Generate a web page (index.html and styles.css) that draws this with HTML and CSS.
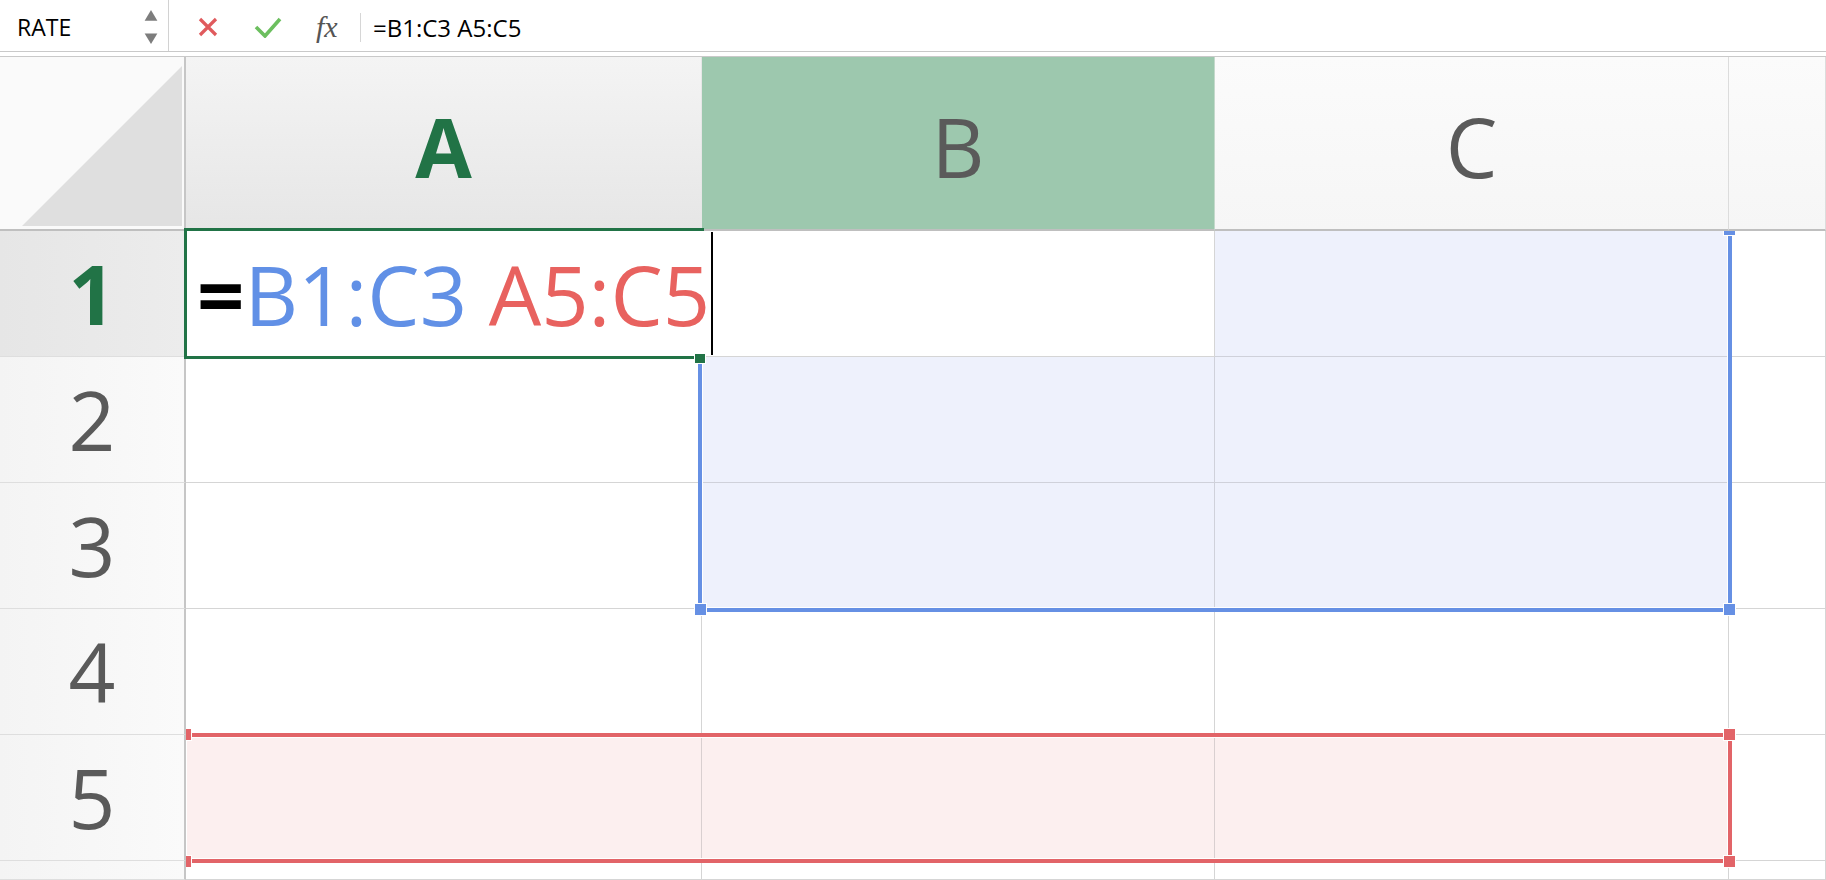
FILE: index.html
```html
<!DOCTYPE html>
<html lang="en">
<head>
    <meta charset="UTF-8">
    <title>Range intersection</title>
    <link rel="stylesheet" href="styles.css">
</head>
<body>
    <div class="formula-bar">
        <div class="name-box">
            <span class="name">RATE</span>
            <svg class="spinner" viewBox="0 0 12 32" width="12" height="32">
                <polygon points="0,10 6,0 12,10" />
                <polygon points="0,22 12,22 6,32" />
            </svg>
        </div>
        <div class="bar-buttons">
            <svg class="btn-cancel" viewBox="0 0 22 22" width="22" height="22">
                <path d="M3 3 L19 19 M19 3 L3 19" />
            </svg>
            <svg class="btn-enter" viewBox="0 0 28 22" width="28" height="22">
                <path d="M2 11 L11 20 L26 3" />
            </svg>
            <span class="fx">fx</span>
            <span class="bar-sep"></span>
        </div>
        <div class="formula-input">=B1:C3 A5:C5</div>
    </div>

    <div class="sheet">
        <div class="corner">
            <svg viewBox="0 0 184 172" width="184" height="172">
                <polygon points="22,169 182,169 182,9" />
            </svg>
        </div>
        <div class="col-head current">A</div>
        <div class="col-head highlight">B</div>
        <div class="col-head">C</div>
        <div class="col-head"></div>

        <div class="row-head current">1</div>
        <div class="cell"></div>
        <div class="cell"></div>
        <div class="cell in-blue"></div>
        <div class="cell"></div>

        <div class="row-head">2</div>
        <div class="cell"></div>
        <div class="cell in-blue"></div>
        <div class="cell in-blue"></div>
        <div class="cell"></div>

        <div class="row-head">3</div>
        <div class="cell"></div>
        <div class="cell in-blue"></div>
        <div class="cell in-blue"></div>
        <div class="cell"></div>

        <div class="row-head">4</div>
        <div class="cell"></div>
        <div class="cell"></div>
        <div class="cell"></div>
        <div class="cell"></div>

        <div class="row-head">5</div>
        <div class="cell in-red"></div>
        <div class="cell in-red"></div>
        <div class="cell in-red"></div>
        <div class="cell"></div>

        <div class="row-head"></div>
        <div class="cell"></div>
        <div class="cell"></div>
        <div class="cell"></div>
        <div class="cell"></div>

        <!-- referenced ranges -->
        <div class="range blue"></div>
        <div class="range red"></div>
        <span class="handle blue tr"></span>
        <span class="handle blue bl"></span>
        <span class="handle blue br"></span>
        <span class="handle red tl"></span>
        <span class="handle red tr"></span>
        <span class="handle red bl"></span>
        <span class="handle red br"></span>

        <!-- cell being edited -->
        <div class="editor"><span class="eq">=</span><span class="ref-blue">B1:C3</span> <span class="ref-red">A5:C5</span><span class="caret"></span></div>
        <span class="handle green"></span>
    </div>
</body>
</html>
```

FILE: styles.css
```css
* {
    box-sizing: border-box;
}

body {
    margin: 0;
    height: 880px;
    overflow: hidden;
    background-color: #ffffff;
    font-family: "Open Sans", "Noto Sans", sans-serif;
    color: #000000;
}

/* formula bar */

.formula-bar {
    display: flex;
    align-items: center;
    height: 52px;
    padding-top: 3px;
    border-bottom: 1px solid #c9c9c9;
}

.name-box {
    display: flex;
    align-items: center;
    align-self: stretch;
    width: 169px;
    margin-top: -3px;
    padding: 3px 10px 0 17px;
    border-right: 1px solid #d2d2d2;
    font-size: 23px;
}

.spinner {
    margin-left: auto;
    width: 14px;
    height: 34px;
    fill: #7d7d7d;
}

.bar-buttons {
    display: flex;
    align-items: center;
    padding-left: 28px;
}

.btn-cancel {
    margin-right: 35px;
    fill: none;
    stroke: #e05a5d;
    stroke-width: 3.2;
}

.btn-enter {
    margin-right: 34px;
    fill: none;
    stroke: #6cbf5f;
    stroke-width: 3.6;
}

.fx {
    width: 26px;
    font-family: "Liberation Serif", serif;
    font-style: italic;
    font-size: 30px;
    color: #555555;
}

.bar-sep {
    width: 1px;
    height: 29px;
    margin-left: 18px;
    background-color: #d6d6d6;
}

.formula-input {
    margin-left: 12px;
    font-size: 24px;
}

/* sheet */

.sheet {
    position: relative;
    display: grid;
    grid-template-columns: 186px 516px 513px 514px 1fr;
    grid-template-rows: 174px repeat(5, 126px) 1fr;
    height: 824px;
    margin-top: 4px;
    border-top: 1px solid #c9c9c9;
    overflow: hidden;
}

.corner {
    position: relative;
    z-index: 2;
    background-color: #fafafa;
    border-right: 2px solid #c6c6c6;
    border-bottom: 2px solid #bfbfbf;
}

.corner svg {
    display: block;
    fill: #dfdfdf;
}

.col-head {
    position: relative;
    z-index: 2;
    padding-top: 6px;
    line-height: 166px;
    text-align: center;
    font-size: 82px;
    color: #5a5a5a;
    background: linear-gradient(#fbfbfb, #f6f6f6);
    border-right: 1px solid #dcdcdc;
    border-bottom: 2px solid #bfbfbf;
}

.col-head.current {
    font-weight: 700;
    color: #217346;
    background: linear-gradient(#f4f4f4, #e6e6e6);
    border-right-color: #e6e6e6;
}

.col-head.highlight {
    background: #9dc8ae;
    border-right-color: #c4d9cb;
}

.row-head {
    position: relative;
    z-index: 2;
    line-height: 125px;
    text-align: center;
    font-size: 82px;
    color: #5a5a5a;
    background: linear-gradient(to right, #f4f4f4, #fafafa);
    border-right: 2px solid #c6c6c6;
    border-bottom: 1px solid #dedede;
}

.row-head.current {
    font-weight: 700;
    color: #217346;
    background: linear-gradient(to right, #e6e6e6, #ececec);
}

.cell {
    background-color: #ffffff;
    border-right: 1px solid #d5d5d5;
    border-bottom: 1px solid #d5d5d5;
}

.cell.in-blue {
    background-color: #eef1fc;
    border-color: #cfd1da;
}

.cell.in-red {
    background-color: #fcefef;
    border-color: #d9cfd0;
}

/* range outlines */

.range {
    position: absolute;
    z-index: 1;
    border: 4px solid;
    box-shadow: inset 0 0 0 1px #ffffff;
}

.range.blue {
    left: 698px;
    top: 169px;
    width: 1034px;
    height: 386px;
    border-color: #6690e4;
}

.range.red {
    left: 182px;
    top: 676px;
    width: 1550px;
    height: 130px;
    border-color: #e26468;
}

.handle {
    position: absolute;
    z-index: 1;
    width: 13px;
    height: 13px;
    border: 1px solid #ffffff;
}

.handle.blue {
    background-color: #6690e4;
}

.handle.red {
    background-color: #e26468;
}

.handle.blue.tr { left: 1723px; top: 166px; }
.handle.blue.bl { left: 694px; top: 546px; }
.handle.blue.br { left: 1723px; top: 546px; }
.handle.red.tl { left: 179px; top: 671px; }
.handle.red.tr { left: 1723px; top: 671px; }
.handle.red.bl { left: 179px; top: 798px; }
.handle.red.br { left: 1723px; top: 798px; }

.handle.green {
    z-index: 4;
    left: 694px;
    top: 296px;
    width: 12px;
    height: 11px;
    background-color: #217346;
}

/* in-cell editor */

.editor {
    position: absolute;
    z-index: 3;
    left: 184px;
    top: 171px;
    width: 520px;
    height: 131px;
    padding-left: 10px;
    border: 3px solid #217346;
    border-right: none;
    background-color: #ffffff;
    white-space: nowrap;
    font-size: 83px;
    line-height: 125px;
}

.eq {
    font-weight: 700;
}

.ref-blue {
    color: #6190e6;
}

.ref-red {
    color: #e8625f;
}

.caret {
    display: inline-block;
    width: 2px;
    height: 123px;
    margin: 1px 0 0 1px;
    vertical-align: top;
    background-color: #000000;
}
```
